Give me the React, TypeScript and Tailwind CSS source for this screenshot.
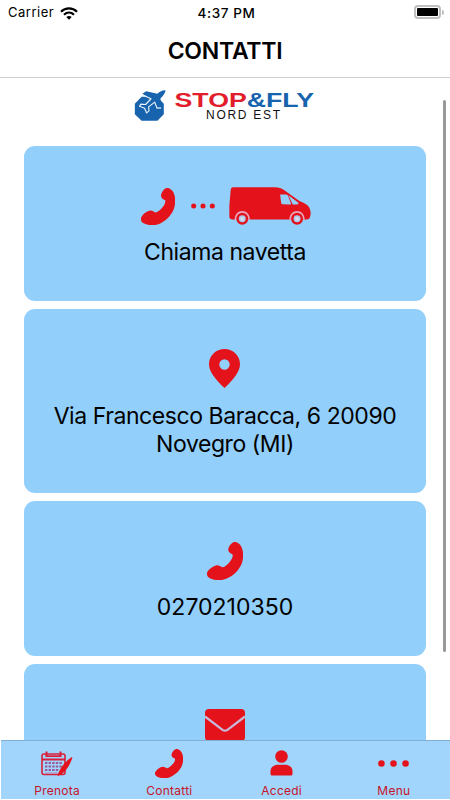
import React, { ReactNode } from 'react';

interface IconProps {
  className?: string;
}

const PhoneIcon = ({ className }: IconProps) => (
  <svg viewBox="0 0 100 110" preserveAspectRatio="none" className={className} fill="#e4121b">
    <path d="M73 1C67 4 60 13 59 21C58 29 64 33 71 36C73 42 69 51 62 59C56 66 50 71 44 73C40 73 35 67 27 67C15 70 4 79 0 89C-1 96 2 102 8 105C21 112 40 113 55 106C74 98 89 81 96 64C101 51 102 33 98 20C95 10 89 4 82 1C79 0 76 0 73 1Z" />
  </svg>
);

const VanIcon = ({ className }: IconProps) => (
  <svg viewBox="0 0 247 115" preserveAspectRatio="none" className={className} fill="#e4121b">
    <path d="M12 1H137C152 1 161 5 171 13L212 42C226 48 240 54 243 65C247 75 247 84 243 94Q241 98 235 98H10Q2 98 1 90V57L5 10Q6 1 12 1Z" />
    <path d="M154 23H171Q176 23 178 27L187 51Q187 53 184 53L160 52Q157 51 157 47Z" fill="#93cffb" />
    <path d="M179 25L208 47Q212 53 204 53H192Z" fill="#93cffb" />
    <path d="M17 99C17 83 28 73 40 73S63 83 63 99ZM182 99C182 83 193 73 205 73S228 83 228 99Z" fill="#e9a8bd" />
    <circle cx="40" cy="96" r="18" />
    <circle cx="40" cy="96" r="10.5" fill="#a9cbed" />
    <circle cx="40" cy="96" r="6" fill="#d4d9ed" />
    <circle cx="205" cy="96" r="18" />
    <circle cx="205" cy="96" r="10.5" fill="#a9cbed" />
    <circle cx="205" cy="96" r="6" fill="#d4d9ed" />
  </svg>
);

const DotsIcon = ({ className }: IconProps) => (
  <svg viewBox="0 0 90 20" className={className} fill="#e4121b">
    <circle cx="10" cy="10" r="9.5" />
    <circle cx="45" cy="10" r="9.5" />
    <circle cx="80" cy="10" r="9.5" />
  </svg>
);

const PinIcon = ({ className }: IconProps) => (
  <svg viewBox="0 0 31 39" className={className}>
    <path
      d="M15.5 0C6.8 0 0 6.7 0 15.2C0 23 7.6 31.6 15.5 39C23.4 31.6 31 23 31 15.2C31 6.7 24.2 0 15.5 0ZM15.5 10.3A5.2 5.2 0 1 1 15.5 20.7A5.2 5.2 0 0 1 15.5 10.3Z"
      fill="#e4121b"
      fillRule="evenodd"
    />
  </svg>
);

const MailIcon = ({ className }: IconProps) => (
  <svg viewBox="0 0 40 32" className={className}>
    <rect width="40" height="32" rx="4" fill="#e4121b" />
    <path d="M0 7.5L17.5 20.8Q20 22.5 22.5 20.8L40 7.5" fill="none" stroke="#c8b9da" strokeWidth="2.2" />
  </svg>
);

const CalendarIcon = ({ className }: IconProps) => (
  <svg viewBox="0 0 32 25" className={className} fill="none" stroke="#d8203c">
    <rect x="1" y="3" width="23" height="20.5" rx="2" strokeWidth="1.6" />
    <path d="M1 8.5H24M4.5 5.2H20.5" strokeWidth="1.8" />
    <path d="M5.5 0.5V5M19.5 0.5V5" strokeWidth="2" />
    <path d="M4 12H22M4 15.5H21M4 19H18" stroke="#985998" strokeWidth="1.8" strokeDasharray="2.4 1.2" />
    <path d="M4 22H20" stroke="#b97eac" strokeWidth="0.8" />
    <path d="M31 6.5C27 8.5 21 14.5 18.5 20.5L17 24.5L21 22.5C25.5 19 29 13 31 6.5Z" fill="#e4121b" stroke="#e4121b" strokeWidth="0.8" />
  </svg>
);

const UserIcon = ({ className }: IconProps) => (
  <svg viewBox="0 0 23 26" className={className} fill="#e4121b">
    <circle cx="11.5" cy="6.5" r="6.3" />
    <path d="M0.5 24V21C0.5 17 4 14.7 8 14.7H15C19 14.7 22.5 17 22.5 21V24Q22.5 25.5 21 25.5H2Q0.5 25.5 0.5 24Z" />
  </svg>
);

const WifiIcon = ({ className }: IconProps) => (
  <svg viewBox="0 0 18 13" className={className} fill="none" stroke="#000" strokeWidth="2.2">
    <path d="M1 4.8C5.5 0.3 12.5 0.3 17 4.8" />
    <path d="M4 7.8C7 5 11 5 14 7.8" />
    <path d="M9 12.8L6.3 10.1Q9 7.8 11.7 10.1Z" fill="#000" stroke="none" />
  </svg>
);

const PlaneLogo = ({ className }: IconProps) => (
  <svg viewBox="0 0 94 92" className={className}>
    <path d="M22 20H68L88 41V72L69 91H22L2 72V41Z" fill="#1763ae" />
    <path
      d="M93 1C85 0 76 5 69 11L36 4L24 11L50 27L34 43L20 42L16 48L31 54L37 68L44 62L43 50L61 36L72 60L80 53L78 25C86 18 93 8 93 1Z"
      fill="#1763ae"
    />
    <path
      d="M24 14L50 26L34 43L20 42L16 48L31 54L37 68L44 62L43 50L61 36L68 54L80 53"
      fill="none"
      stroke="#e8f2fb"
      strokeWidth="3.4"
      strokeLinejoin="round"
    />
  </svg>
);

const StatusBar = () => (
  <div className="flex h-[26px] items-center justify-between pl-2 pr-[6px] text-[13px]">
    <div className="flex w-[150px] items-center gap-[6px]">
      <span className="tracking-[0.5px]">Carrier</span>
      <WifiIcon className="h-[13px] w-[18px]" />
    </div>
    <span className="pl-px text-[13.5px] font-medium tracking-[0.6px]">4:37 PM</span>
    <div className="flex w-[150px] items-center justify-end gap-px pb-[2px]">
      <div className="h-[14px] w-[27px] rounded-[4px] border-2 border-[#c0c0c0] p-px">
        <div className="h-full rounded-[1px] bg-black" />
      </div>
      <div className="h-[5px] w-[2px] rounded-r-full bg-[#c0c0c0]" />
    </div>
  </div>
);

const Brand = () => (
  <div className="flex h-[68px] items-start pl-[134px] pt-[6px]">
    <PlaneLogo className="mt-[6px] h-[31px] w-[32px]" />
    <svg viewBox="0 0 150 42" className="ml-[8px] h-[42px] w-[150px]">
      <g fontFamily="Liberation Sans, sans-serif">
        <text x="0.5" y="22.5" fontSize="20.5" fontWeight="700" textLength="139.5" lengthAdjust="spacingAndGlyphs">
          <tspan fill="#e21d2c">STOP</tspan>
          <tspan fill="#1763ae">&amp;FLY</tspan>
        </text>
        <text x="32" y="35" fontSize="12" fill="#111" textLength="74">NORD EST</text>
      </g>
    </svg>
  </div>
);

interface CardProps {
  height: string;
  icon: ReactNode;
  children?: ReactNode;
}

const Card = ({ height, icon, children }: CardProps) => (
  <div className={`${height} shrink-0 rounded-[11px] bg-[#93cffb] text-center text-[23px] leading-[28px]`}>
    {icon}
    {children}
  </div>
);

interface TabProps {
  label: string;
  children: ReactNode;
}

const Tab = ({ label, children }: TabProps) => (
  <div className="flex flex-1 flex-col items-center">
    <div className="flex h-[42px] items-center justify-center pt-[2px]">{children}</div>
    <span className="text-[12px] leading-[16px] tracking-[0.25px] text-[#c5132b]">{label}</span>
  </div>
);

export default function App() {
  return (
    <div className="flex h-[800px] w-[450px] flex-col overflow-hidden bg-white font-[Inter,sans-serif] text-black">
      <header className="h-[78px] shrink-0 border-b border-[#cfcfcf]">
        <StatusBar />
        <h1 className="pt-[9px] text-center text-[23px] font-semibold leading-[32px] tracking-[-0.25px]">CONTATTI</h1>
      </header>

      <main className="relative min-h-0 flex-1 overflow-hidden">
        <Brand />
        <div className="flex flex-col gap-[8px] px-[24px]">
          <Card
            height="h-[155px]"
            icon={
              <div className="flex items-center pl-[117px] pt-[41px]">
                <PhoneIcon className="h-[37px] w-[34px]" />
                <DotsIcon className="ml-[16px] h-[6px] w-[24px]" />
                <VanIcon className="ml-[14px] h-[38px] w-[82px]" />
              </div>
            }
          >
            <p className="mt-[13px] tracking-[-0.43px]">Chiama navetta</p>
          </Card>
          <Card height="h-[184px]" icon={<PinIcon className="ml-[185px] mt-[40px] h-[39px] w-[31px]" />}>
            <p className="mt-[14px] tracking-[-0.43px]">
              Via Francesco Baracca, 6 20090
              <br />
              Novegro (MI)
            </p>
          </Card>
          <Card height="h-[155px]" icon={<PhoneIcon className="mx-auto mt-[41px] h-[38px] w-[36px]" />}>
            <p className="mt-[13px]">0270210350</p>
          </Card>
          <Card height="h-[155px]" icon={<MailIcon className="mx-auto mt-[45px] h-[32px] w-[40px]" />} />
        </div>
        <div className="absolute right-[4px] top-[22px] h-[552px] w-[3px] rounded-full bg-[#999]" />
      </main>

      <nav className="mb-px ml-px flex h-[59px] shrink-0 border-t border-[#7faed2] bg-[#a2d5fb]">
        <Tab label="Prenota">
          <CalendarIcon className="h-[25px] w-[32px]" />
        </Tab>
        <Tab label="Contatti">
          <PhoneIcon className="h-[29px] w-[28px]" />
        </Tab>
        <Tab label="Accedi">
          <UserIcon className="h-[26px] w-[23px]" />
        </Tab>
        <Tab label="Menu">
          <DotsIcon className="h-[7px] w-[31px]" />
        </Tab>
      </nav>
    </div>
  );
}
